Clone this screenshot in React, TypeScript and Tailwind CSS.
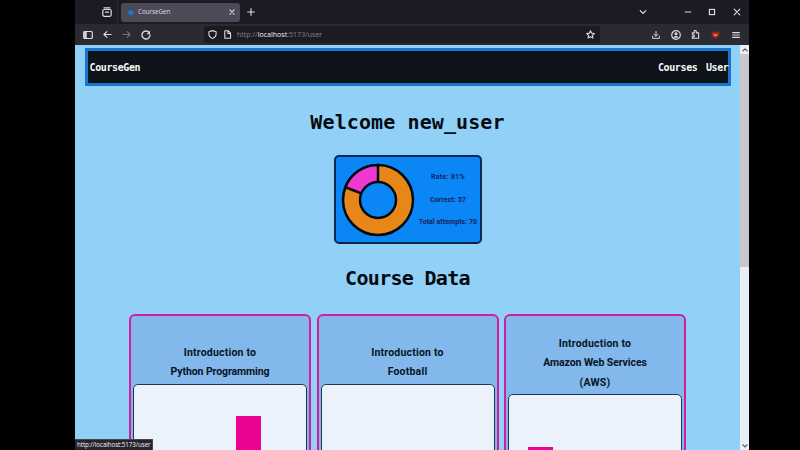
import React from 'react';

const ui = "font-['Open_Sans','Noto_Sans',sans-serif]";
const stroke = { fill: 'none', stroke: 'currentColor', strokeWidth: 1.2, strokeLinecap: 'round', strokeLinejoin: 'round' } as const;

function Icon({ size = 10, className = '', children }: { size?: number; className?: string; children: React.ReactNode }) {
  return (
    <svg width={size} height={size} viewBox="0 0 10 10" className={`shrink-0 ${className}`} {...stroke}>
      {children}
    </svg>
  );
}

function TabBar() {
  return (
    <div className="flex h-6 shrink-0 items-center bg-[#1c1b24] text-[#dcdce2]">
      <div className="flex h-6 w-[43px] items-center border-r border-[#2c2b35] pl-[27px]">
        <Icon>
          <path d="M2 .8h6" />
          <rect x=".8" y="2.5" width="8.4" height="6.8" rx="1.5" />
          <path d="M3.5 5.2h3" />
        </Icon>
      </div>
      <div className="ml-[3px] flex h-[19px] w-[119px] items-center rounded-[3px] bg-[#4b4a56] pl-[6px] pr-[5px]">
        <svg width="7" height="7" viewBox="0 0 7 7" className="shrink-0">
          <path d="M0 1.3 2.5 2 3.5 .6 7 2.8 6.2 5.2 3.8 6.4 1.2 4.5Z" fill="#1679cf" />
        </svg>
        <span className="ml-[4px] flex-1 text-[6.4px] leading-[10px] tracking-[-0.1px]">CourseGen</span>
        <Icon size={6}><path d="M1.5 1.5l7 7M8.5 1.5l-7 7" strokeWidth="1.8" /></Icon>
      </div>
      <Icon size={8} className="ml-[7px]"><path d="M5 .8v8.4M.8 5h8.4" strokeWidth="1.4" /></Icon>
      <div className="flex-1" />
      <Icon size={8} className="mr-[37px]"><path d="M1.5 3.3l3.5 3.5 3.5-3.5" strokeWidth="1.5" /></Icon>
      <Icon size={8} className="mr-[16px]"><path d="M1.5 5h7" /></Icon>
      <Icon size={8} className="mr-[17px]"><rect x="1.8" y="1.8" width="6.4" height="6.4" strokeWidth="1.5" strokeLinejoin="miter" /></Icon>
      <Icon size={8} className="mr-[8px]"><path d="M1.5 1.5l7 7M8.5 1.5l-7 7" strokeWidth="1.4" /></Icon>
    </div>
  );
}

function Toolbar() {
  return (
    <div className="flex h-[21px] shrink-0 items-center bg-[#2b2a33] pl-[8px] text-[#dcdce2]">
      <Icon>
        <rect x=".7" y="1.5" width="8.6" height="7" rx="1" />
        <path d="M1.2 2h2.5v6H1.2z" fill="currentColor" stroke="none" />
      </Icon>
      <Icon size={9} className="ml-[10px]"><path d="M9 5H1M4.3 1.7L1 5l3.3 3.3" /></Icon>
      <Icon size={9} className="ml-[10px] text-[#75747e]"><path d="M1 5h8M5.7 1.7L9 5 5.7 8.3" /></Icon>
      <Icon size={10} className="ml-[10px]">
        <path d="M8.2 2.6A4 4 0 1 0 9 5" strokeWidth="1.3" />
        <path d="M9 .8v3.4H5.6z" fill="currentColor" stroke="none" />
      </Icon>
      <div className="ml-[53px] flex h-[17px] w-[396px] items-center rounded-[3px] bg-[#1c1b22] pl-[4px] pr-[5px]">
        <Icon size={9}>
          <path d="M5 .7 9 2v2.5C9 7 7.4 8.5 5 9.4 2.6 8.5 1 7 1 4.5V2z" />
        </Icon>
        <Icon size={9} className="ml-[6px]">
          <path d="M2 .8h3.7L8.4 3.5v5.7H2zM5.5 1v2.8h2.7" />
        </Icon>
        <span className="ml-[5px] flex-1 whitespace-nowrap text-[7px] leading-[10px] tracking-[0.02px] text-[#85848e]">
          http://<span className="text-[#f1f1f5]">localhost</span>:5173/user
        </span>
        <Icon size={9}>
          <path d="M5 .8 6.3 3.5 9.3 3.9 7.1 6 7.7 9 5 7.6 2.3 9 2.9 6 .7 3.9 3.7 3.5z" />
        </Icon>
      </div>
      <div className="flex-1" />
      <Icon size={8} className="mr-[11px]"><path d="M5 .5v5.800M2.5 4 5 6.5 7.5 4M.8 6.5v2.7h8.4V6.5" /></Icon>
      <Icon size={10} className="mr-[10px]">
        <circle cx="5" cy="5" r="4.3" />
        <circle cx="5" cy="3.8" r="1.5" fill="currentColor" stroke="none" />
        <path d="M2.5 7.8c.4-2.5 4.6-2.5 5 0z" fill="currentColor" stroke="none" />
      </Icon>
      <Icon size={9} className="mr-[11px]">
        <path d="M1.5 3.2h2V1.7a1.2 1.2 0 0 1 2.4 0v1.5h2.6v6h-7V7.6h1.2a1.1 1.1 0 0 0 0-2.2H1.5z" />
      </Icon>
      <svg width="9" height="8" viewBox="0 0 9 8" className="mr-[12px] shrink-0">
        <path d="M1 1 2.5.3 4.5 1 6.5.3 8 1 8.7 3.5 6.7 6.5 4.5 7.8 2.3 6.5.3 3.5Z" fill="#9e2418" />
        <path d="M2.5 2.4 4.5 3.4 6.5 2.4 6.2 4.4 4.5 5.6 2.8 4.4Z" fill="#e0875c" />
      </svg>
      <Icon size={8} className="mr-[9px]"><path d="M.8 2h8.4M.8 5h8.4M.8 8h8.4" strokeWidth="1.4" /></Icon>
    </div>
  );
}

function CourseCard({ lines, children }: { lines: string[]; children?: React.ReactNode }) {
  return (
    <article className="flex h-[200px] w-[182px] shrink-0 flex-col rounded-[6px] border-2 border-[#d01f9c] bg-[#82b8ec] px-[2px]">
      <h3 className={`${lines.length > 2 ? 'pt-[18px]' : 'pt-[27px]'} pb-[2px] text-center text-[10.5px] font-bold leading-[19.3px] text-[#071522]`}>
        {lines.map((line) => (
          <span key={line} className={`block whitespace-nowrap ${line.length > 16 ? 'tracking-[-0.08px]' : 'tracking-[0.2px]'}`}>{line}</span>
        ))}
      </h3>
      <div className="flex flex-1 items-end rounded-[5px] border-[1.5px] border-[#20374f] bg-[#ebf2fc]">{children}</div>
    </article>
  );
}

function Donut() {
  return (
    <svg width="74" height="74" viewBox="0 0 74 74" className="shrink-0" stroke="#050a10" strokeWidth="2.5">
      <circle cx="37" cy="37" r="35" fill="#e78619" />
      <path d="M37 37V2A35 35 0 0 0 4.4 24.2Z" fill="#ee38cf" />
      <circle cx="37" cy="37" r="18" fill="#0a86f6" />
    </svg>
  );
}

export default function App() {
  return (
    <div className={`flex h-[450px] w-[800px] overflow-hidden bg-black pl-[75px] ${ui}`}>
      <div className="relative flex w-[674px] flex-col overflow-hidden">
        <TabBar />
        <Toolbar />
        <div className="flex h-[405px] shrink-0">
          <main className="flex h-[405px] w-[665px] flex-col items-center overflow-hidden bg-[#91d1f8] pt-[3px] font-['Roboto',sans-serif] text-[#050a10]">
            <nav className="flex h-[38px] w-[646px] shrink-0 items-center justify-between border-[3px] border-[#1976cd] bg-[#0d1319] pl-[2px] pt-px font-['DejaVu_Sans_Mono',monospace] text-[10px] font-bold tracking-[-0.38px] text-[#f7f9fa]">
              <span>CourseGen</span>
              <div className="-mr-px flex gap-[8.5px]"><span>Courses</span><span>User</span></div>
            </nav>
            <h1 className="mt-[24px] shrink-0 font-['DejaVu_Sans_Mono',monospace] text-[20px] font-bold leading-[24px] tracking-[0.1px]">Welcome new_user</h1>
            <section className="mt-[21px] flex h-[89px] w-[148px] shrink-0 items-center rounded-[5px] border-2 border-[#0b284a] bg-[#0a86f6] pl-[5px]">
              <Donut />
              <div className="ml-[2px] flex flex-1 flex-col items-center gap-[12.5px] whitespace-nowrap text-[7px] font-bold leading-[10px] tracking-[0.05px] text-[#1b2058]">
                <span className="tracking-[0.3px]">Rate: 81%</span>
                <span className="tracking-[0.1px]">Correct: 57</span>
                <span>Total attempts: 70</span>
              </div>
            </section>
            <h2 className="mt-[22px] shrink-0 font-['DejaVu_Sans_Mono',monospace] text-[20px] font-bold leading-[24px] tracking-[-0.7px]">Course Data</h2>
            <div className="mt-[24px] flex shrink-0 gap-[5.5px]">
              <CourseCard lines={['Introduction to', 'Python Programming']}>
                <div className="ml-[102px] h-[95px] w-[25px] bg-[#eb0290]" />
              </CourseCard>
              <CourseCard lines={['Introduction to', 'Football']} />
              <CourseCard lines={['Introduction to', 'Amazon Web Services', '(AWS)']}>
                <div className="ml-[19px] h-[64px] w-[25px] bg-[#eb0290]" />
              </CourseCard>
            </div>
          </main>
          <div className="flex w-[9px] flex-col items-center bg-[#eceef5] text-[#555]">
            <div className="flex h-[9px] items-center"><Icon size={6}><path d="M1.5 6.5 5 3l3.5 3.5" strokeWidth="2" /></Icon></div>
            <div className="h-[213px] w-full bg-[#c8c8c8]" />
            <div className="flex-1" />
            <div className="flex h-[9px] items-center"><Icon size={6}><path d="M1.5 3 5 6.5 8.5 3" strokeWidth="2" /></Icon></div>
          </div>
        </div>
        <div className="absolute bottom-0 left-0 h-[11px] w-[78px] whitespace-nowrap border-t border-r border-[#45444f] bg-[#25242d] pl-[2px] text-[6.2px] leading-[9px] tracking-[-0.05px] text-[#f0f0f5]">http://localhost:5173/user</div>
      </div>
    </div>
  );
}
